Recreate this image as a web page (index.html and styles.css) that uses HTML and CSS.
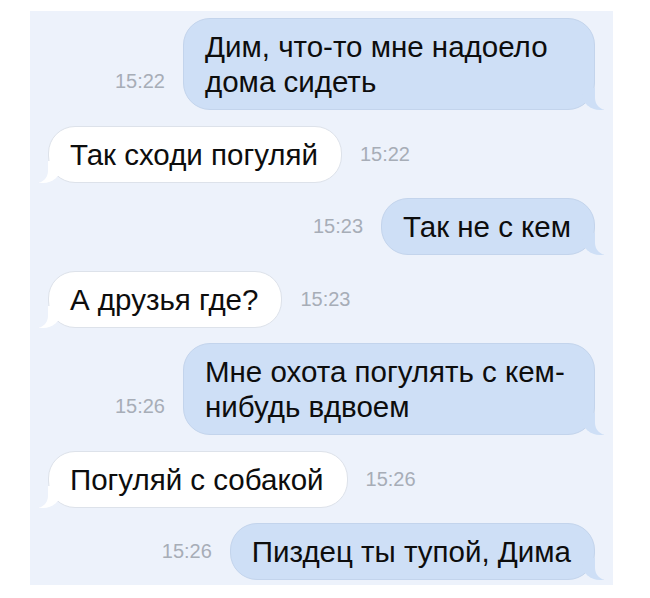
FILE: index.html
```html
<!DOCTYPE html>
<html lang="ru">
<head>
    <meta charset="UTF-8">
    <meta name="viewport" content="width=device-width, initial-scale=1.0">
    <title>Сообщения</title>
    <link rel="stylesheet" href="styles.css">
</head>
<body>

    <div class="chat">
        <div class="msg out">
            <span class="time">15:22</span>
            <div class="bubble">Дим, что-то мне надоело дома сидеть</div>
        </div>
        <div class="msg in">
            <div class="bubble">Так сходи погуляй</div>
            <span class="time">15:22</span>
        </div>
        <div class="msg out">
            <span class="time">15:23</span>
            <div class="bubble">Так не с кем</div>
        </div>
        <div class="msg in">
            <div class="bubble">А друзья где?</div>
            <span class="time">15:23</span>
        </div>
        <div class="msg out">
            <span class="time">15:26</span>
            <div class="bubble">Мне охота погулять с кем-нибудь вдвоем</div>
        </div>
        <div class="msg in">
            <div class="bubble">Погуляй с собакой</div>
            <span class="time">15:26</span>
        </div>
        <div class="msg out">
            <span class="time">15:26</span>
            <div class="bubble">Пиздец ты тупой, Дима</div>
        </div>
    </div>

</body>
</html>
```

FILE: styles.css
```css
/* Переписка в стиле iMessage */
body {
    margin: 0;
    background: #fff;
    font-family: "Liberation Sans", Arial, sans-serif;
}

.chat {
    box-sizing: border-box;
    width: 583px;
    height: 574px;
    margin: 11px 0 0 30px;
    padding: 7px 18px 0;
    background: #edf2fb;
    display: flex;
    flex-direction: column;
    gap: 15.5px;
}

.msg {
    display: flex;
    align-items: flex-end;
    gap: 18px;
}

.msg.out {
    justify-content: flex-end;
}

.bubble {
    position: relative;
    box-sizing: border-box;
    max-width: 412px;
    padding: 10px 23px 10px 21px;
    font-size: 29.5px;
    line-height: 35px;
    color: #0d0d0d;
    border-radius: 27px;
}

.out .bubble {
    background: #cedff6;
    border: 1px solid #c3d4ec;
}

.in .bubble {
    background: #fff;
    border: 1px solid #dde2ea;
}

/* хвостики у пузырей */
.bubble::before,
.bubble::after {
    content: "";
    position: absolute;
    bottom: -1px;
    height: 22px;
}

.out .bubble::before {
    right: -10px;
    width: 22px;
    background: #cedff6;
    border-bottom-left-radius: 18px 16px;
}

.out .bubble::after {
    right: -15px;
    width: 14px;
    background: #edf2fb;
    border-bottom-left-radius: 12px;
}

.in .bubble::before {
    left: -10px;
    width: 22px;
    background: #fff;
    border-bottom-right-radius: 18px 16px;
}

.in .bubble::after {
    left: -15px;
    width: 14px;
    background: #edf2fb;
    border-bottom-right-radius: 12px;
}

.time {
    font-size: 20px;
    line-height: 35px;
    padding-bottom: 11px;
    color: #a7adb7;
}
```
